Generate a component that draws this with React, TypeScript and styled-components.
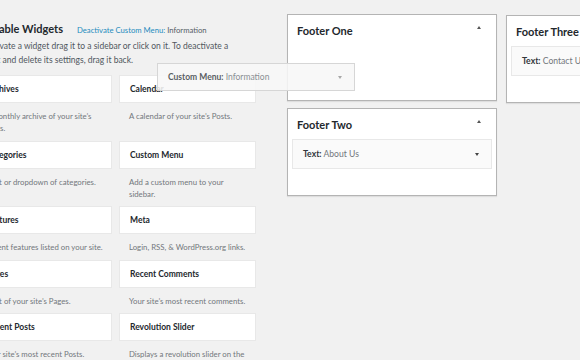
import React from 'react'
import styled, { createGlobalStyle } from 'styled-components'

const Global = createGlobalStyle`
  body {
    margin: 0;
    background: #f1f1f1;
    font-family: Lato, "Open Sans", sans-serif;
    color: #23282d;
    overflow: hidden;
  }
`

const Page = styled.div`
  display: flex;
  align-items: flex-start;
  width: 640px;
  height: 360px;
  margin-left: -25px;
  position: relative;
`

const Available = styled.div`
  width: 281px;
  padding-top: 21px;
  flex-shrink: 0;
`

const HeadRow = styled.div`
  display: flex;
  align-items: baseline;
  gap: 14px;
`

const Heading = styled.h2`
  margin: 0;
  font-size: 11px;
  font-weight: 700;
  line-height: 16px;
`

const Deactivate = styled.span`
  font-size: 7.7px;
  color: #1e8cbe;
  span { color: #555d66; }
`

const Description = styled.p`
  margin: 2px 0 0;
  max-width: 262px;
  font-size: 8.5px;
  line-height: 14px;
  color: #50575e;
`

const Grid = styled.div`
  display: grid;
  grid-template-columns: 137px 137px;
  column-gap: 7px;
  margin-top: 8px;
`

const Widget = styled.div`
  padding-bottom: 6.5px;
`

const WidgetTop = styled.div`
  box-sizing: border-box;
  height: 28px;
  padding-left: 10px;
  background: #fff;
  border: 1px solid #e8e8e8;
  font-size: 8.5px;
  font-weight: 700;
  line-height: 26px;
  white-space: nowrap;
  overflow: hidden;
`

const WidgetDesc = styled.div`
  margin-top: 7px;
  padding: 0 9px 0 10px;
  font-size: 7.8px;
  line-height: 12px;
  color: #72777c;
`

const Sidebars = styled.div`
  display: flex;
  gap: 9px;
  margin-left: 31px;
  padding-top: 14px;
`

const SidebarColumn = styled.div`
  display: flex;
  flex-direction: column;
  gap: 7px;
  width: 210px;
  flex-shrink: 0;
`

const Area = styled.div<{ $top?: number }>`
  box-sizing: border-box;
  min-height: 87px;
  margin-top: ${(p) => p.$top ?? 0}px;
  background: #fff;
  border: 1px solid #b4b4b4;
  box-shadow: 0 1px 1px rgba(0, 0, 0, 0.08);
  position: relative;
  padding: 0 4px 26px;
`

const AreaTitle = styled.h3`
  margin: 0;
  height: 30px;
  padding: 8px 0 0 5px;
  box-sizing: border-box;
  font-size: 11px;
  font-weight: 700;
  line-height: 16px;
  white-space: nowrap;
`

const Arrow = styled.span<{ $up?: boolean; $color?: string }>`
  position: absolute;
  width: 0;
  height: 0;
  border-left: 2.5px solid transparent;
  border-right: 2.5px solid transparent;
  ${(p) =>
    p.$up
      ? `border-bottom: 3.5px solid ${p.$color ?? '#555'};`
      : `border-top: 3.5px solid ${p.$color ?? '#444'};`}
`

const AreaArrow = styled(Arrow)`
  top: 11px;
  right: 15px;
`

const InnerWidget = styled.div`
  position: relative;
  box-sizing: border-box;
  height: 30px;
  padding-left: 10px;
  background: #fafafa;
  border: 1px solid #e8e8e8;
  font-size: 8.6px;
  line-height: 28px;
  color: #72777c;
  white-space: nowrap;
  b { color: #32373c; font-weight: 700; }
`

const InnerArrow = styled(Arrow)`
  top: 13px;
  right: 12px;
`

const Helper = styled.div`
  position: absolute;
  left: 182px;
  top: 63px;
  width: 198px;
  height: 28px;
  box-sizing: border-box;
  padding-left: 10px;
  background: rgba(247, 247, 247, 0.88);
  border: 1px solid #d6d6d6;
  font-size: 8.5px;
  line-height: 26px;
  color: #8a8f94;
  b { color: #5a5f64; font-weight: 700; }
`

const HelperArrow = styled(Arrow)`
  top: 12px;
  right: 12px;
`

const widgets: [string, string][] = [
  ['Archives', "A monthly archive of your site\u2019s Posts."],
  ['Calendar', "A calendar of your site\u2019s Posts."],
  ['Categories', 'A list or dropdown of categories.'],
  ['Custom Menu', 'Add a custom menu to your sidebar.'],
  ['Features', 'Recent features listed on your site.'],
  ['Meta', 'Login, RSS, & WordPress.org links.'],
  ['Pages', "A list of your site\u2019s Pages."],
  ['Recent Comments', "Your site\u2019s most recent comments."],
  ['Recent Posts', "Your site\u2019s most recent Posts."],
  ['Revolution Slider', 'Displays a revolution slider on the page.'],
]

export default function App() {
  return (
    <>
      <Global />
      <Page>
        <Available>
          <HeadRow>
            <Heading>Available Widgets</Heading>
            <Deactivate>
              Deactivate Custom Menu: <span>Information</span>
            </Deactivate>
          </HeadRow>
          <Description>
            To activate a widget drag it to a sidebar or click on it. To deactivate a widget and
            delete its settings, drag it back.
          </Description>
          <Grid>
            {widgets.map(([title, desc]) => (
              <Widget key={title}>
                <WidgetTop>{title}</WidgetTop>
                <WidgetDesc>{desc}</WidgetDesc>
              </Widget>
            ))}
          </Grid>
        </Available>

        <Sidebars>
          <SidebarColumn>
            <Area>
              <AreaTitle>Footer One</AreaTitle>
              <AreaArrow $up />
            </Area>
            <Area>
              <AreaTitle>Footer Two</AreaTitle>
              <AreaArrow $up />
              <InnerWidget>
                <b>Text:</b> About Us
                <InnerArrow />
              </InnerWidget>
            </Area>
          </SidebarColumn>
          <SidebarColumn>
            <Area $top={1}>
              <AreaTitle>Footer Three</AreaTitle>
              <InnerWidget>
                <b>Text:</b> Contact Us
                <InnerArrow />
              </InnerWidget>
            </Area>
          </SidebarColumn>
        </Sidebars>

        <Helper>
          <b>Custom Menu:</b> Information
          <HelperArrow $color="#a8a8a8" />
        </Helper>
      </Page>
    </>
  )
}
